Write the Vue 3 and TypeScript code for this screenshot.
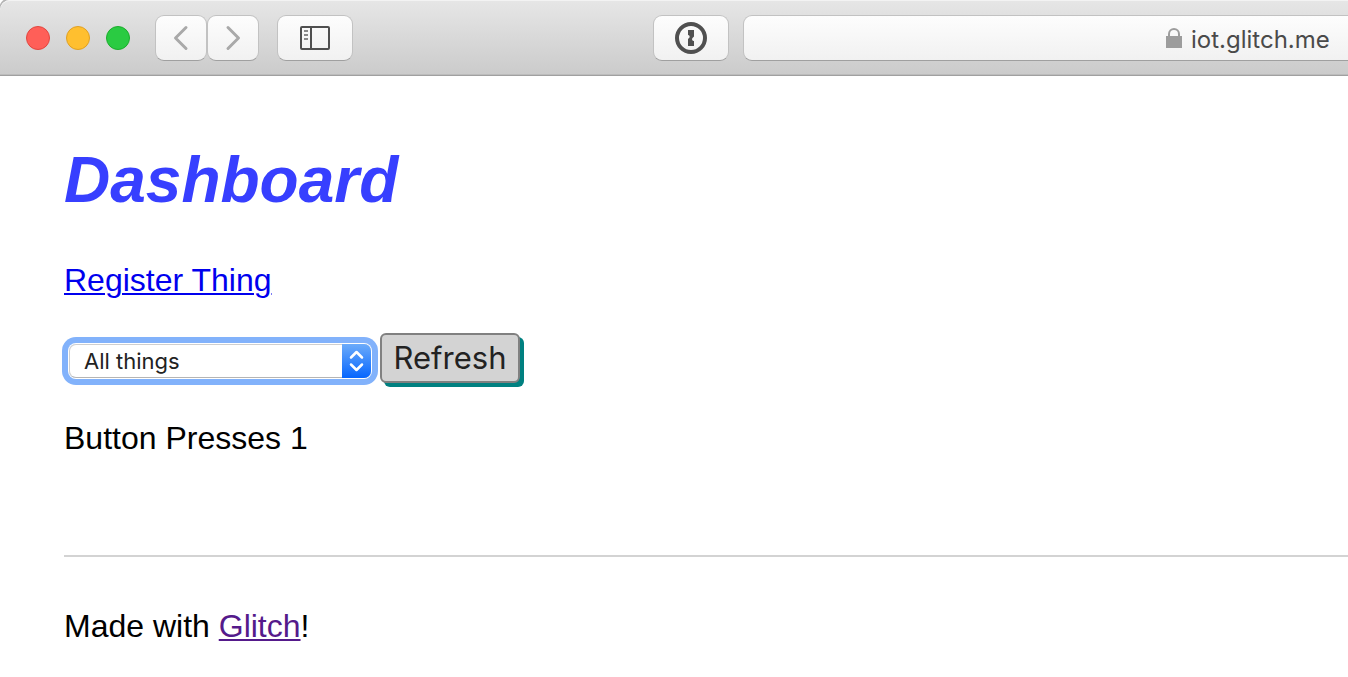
<script setup lang="ts">
import { ref } from 'vue'

const address = ref<string>('iot.glitch.me')
const things: string[] = ['All things']
const selected = ref<string>(things[0])
const presses = ref<number>(1)

function refresh(): void {
  selected.value = things[0]
}
</script>

<template>
  <div class="window">
    <header class="toolbar">
      <div class="lights">
        <button class="light close" type="button" aria-label="Close"></button>
        <button class="light minimize" type="button" aria-label="Minimize"></button>
        <button class="light zoom" type="button" aria-label="Zoom"></button>
      </div>
      <div class="history">
        <button class="tool narrow" type="button" aria-label="Back">
          <svg width="50" height="44" viewBox="0 0 50 44" fill="none" stroke="#a9a9a9" stroke-width="3" stroke-linecap="round" stroke-linejoin="round">
            <path d="M30 11.500 19.500 22 30 32.500" />
          </svg>
        </button>
        <button class="tool narrow" type="button" aria-label="Forward">
          <svg width="50" height="44" viewBox="0 0 50 44" fill="none" stroke="#a9a9a9" stroke-width="3" stroke-linecap="round" stroke-linejoin="round">
            <path d="M20 11.500 30.500 22 20 32.500" />
          </svg>
        </button>
      </div>
      <button class="tool" type="button" aria-label="Sidebar">
        <svg width="30" height="24" viewBox="0 0 30 24" fill="none" stroke="#505050" stroke-width="2">
          <rect x="1" y="1" width="28" height="22" rx="1" />
          <path d="M11 1v22" />
          <path d="M4 5h4M4 9h4M4 13h4" stroke="#8a8a8a" />
        </svg>
      </button>
      <button class="tool password" type="button" aria-label="Passwords">
        <svg width="32" height="32" viewBox="0 0 32 32">
          <circle cx="16" cy="16" r="14" fill="none" stroke="#505050" stroke-width="4" />
          <path d="M13 8h6v6.500l-1.500 1.500a1.800 1.800 0 0 0 1.500 3V24h-6v-7l1.500-1.500a1.800 1.800 0 0 0-1.500-2.500z" fill="#505050" />
        </svg>
      </button>
      <label class="address">
        <svg width="16" height="20" viewBox="0 0 16 20">
          <path d="M3 10V6a5 5 0 0 1 10 0v4" fill="none" stroke="#9c9c9c" stroke-width="2" />
          <rect y="8" width="16" height="12" fill="#9c9c9c" />
        </svg>
        <input v-model="address" type="text" aria-label="Address" />
      </label>
    </header>

    <main class="page">
      <h1>Dashboard</h1>
      <p><a class="register" href="#register">Register Thing</a></p>
      <div class="controls">
        <div class="picker">
          <select v-model="selected" aria-label="Thing">
            <option v-for="thing in things" :key="thing" :value="thing">{{ thing }}</option>
          </select>
          <svg class="arrows" width="29" height="34" viewBox="0 0 29 34" fill="none" stroke="#fff" stroke-width="2.500" stroke-linecap="round" stroke-linejoin="round">
            <path d="M9 13.500 14.500 8 20 13.500M9 20.500 14.500 26 20 20.500" />
          </svg>
        </div>
        <button class="refresh" type="button" @click="refresh">Refresh</button>
      </div>
      <p>Button Presses {{ presses }}</p>
      <footer>
        <p>Made with <a class="glitch" href="#glitch">Glitch</a>!</p>
      </footer>
    </main>
  </div>
</template>

<style>
body {
  margin: 0;
  background: #fff;
}
</style>

<style scoped>
.window {
  overflow: hidden;
  font-family: "Liberation Sans", Arial, sans-serif;
  color: #000;
}

.toolbar {
  display: flex;
  align-items: center;
  box-sizing: border-box;
  height: 76px;
  padding-left: 26px;
  border-top: 1px solid #f3f3f3;
  border-bottom: 1px solid #a0a0a0;
  border-top-left-radius: 10px;
  background: linear-gradient(#e6e6e6, #cbcbcb);
  box-shadow: 0 -1px 0 1px #b5b5b5, inset 0 -1px 0 #bcbcbc;
}

.lights {
  display: flex;
  gap: 16px;
  margin-right: 25px;
}

.light {
  width: 24px;
  height: 24px;
  padding: 0;
  border: 1px solid;
  border-radius: 50%;
}

.close {
  background: #ff5f58;
  border-color: #e2463f;
}

.minimize {
  background: #ffbf2f;
  border-color: #e0a023;
}

.zoom {
  background: #2acb42;
  border-color: #1bad2c;
}

.history {
  display: flex;
  margin-right: 18px;
}

.tool {
  display: flex;
  flex: none;
  align-items: center;
  justify-content: center;
  box-sizing: border-box;
  width: 76px;
  height: 46px;
  padding: 0;
  border: 1px solid #c2c2c2;
  border-bottom-color: #a0a0a0;
  border-radius: 9px;
  background: linear-gradient(#fdfdfd, #f1f1f1);
}

.narrow {
  width: 52px;
}

.password {
  margin-left: 300px;
}

.address {
  display: flex;
  flex: 1;
  align-items: center;
  justify-content: flex-end;
  gap: 9px;
  box-sizing: border-box;
  height: 46px;
  margin-left: 14px;
  padding-right: 16px;
  border: 1px solid #c2c2c2;
  border-bottom-color: #a0a0a0;
  border-right: 0;
  border-radius: 9px 0 0 9px;
  background: linear-gradient(#fdfdfd, #f1f1f1);
}

.address input {
  width: 141px;
  padding: 4px 0 0;
  border: 0;
  outline: 0;
  background: transparent;
  color: #4a4a4a;
  font: 24px/32px Inter, sans-serif;
}

.page {
  padding: 66px 0 0 64px;
}

h1 {
  margin: 0 0 44px;
  color: #373fff;
  font-size: 64px;
  font-style: italic;
  line-height: 76px;
}

p {
  margin: 0;
  font-size: 32px;
  line-height: 36px;
}

a {
  text-decoration-thickness: 2px;
  text-underline-offset: 2px;
}

.register {
  color: #0000ee;
}

.glitch {
  color: #551a8b;
}

.controls {
  display: flex;
  align-items: center;
  gap: 9px;
  margin: 35px 0 37px;
  padding-left: 5px;
}

.picker {
  position: relative;
  width: 302px;
  height: 34px;
  margin-top: 6px;
  border-radius: 7px;
  box-shadow: 0 0 0 1px #fff, 0 0 0 7px #82b2fb;
}

select {
  display: block;
  box-sizing: border-box;
  width: 100%;
  height: 34px;
  padding: 0 40px 0 14px;
  border: 1px solid #cfcfcf;
  border-bottom-color: #b5b5b5;
  border-radius: 7px;
  outline: 0;
  appearance: none;
  background: #fff;
  color: #222;
  font: 22px/32px Inter, sans-serif;
}

.arrows {
  position: absolute;
  top: 0;
  right: 0;
  border-radius: 0 7px 7px 0;
  background: linear-gradient(#6cabfa, #0666fe);
  pointer-events: none;
}

.refresh {
  box-sizing: border-box;
  width: 140px;
  height: 50px;
  padding: 0;
  border: 2px solid #808080;
  border-radius: 6px;
  background: #d3d3d3;
  box-shadow: 4px 4px 0 #008080;
  color: #222;
  font: 31px/46px Inter, sans-serif;
}

footer {
  margin-top: 99px;
  padding-top: 51px;
  border-top: 2px solid #d3d3d3;
}
</style>
